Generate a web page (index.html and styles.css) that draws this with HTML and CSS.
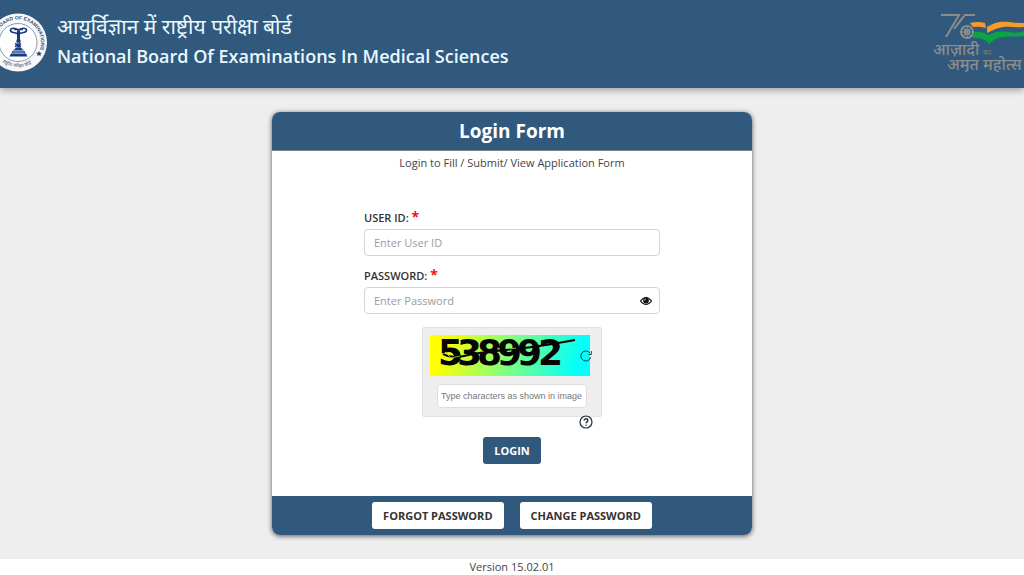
FILE: index.html
```html
<!DOCTYPE html>
<html lang="en">
<head>
<meta charset="utf-8">
<meta name="viewport" content="width=device-width, initial-scale=1">
<title>Login Form</title>
<link rel="stylesheet" href="styles.css">
</head>
<body>
<header class="site-header">
  <svg class="seal" viewBox="0 0 47 60" aria-hidden="true">
    <defs>
      <path id="ring-top" d="M-5 30A23 23 0 0 1 41 30A23 23 0 0 1 38 42"/>
      <path id="ring-bottom" d="M-7 38A27 27 0 0 0 43 38"/>
    </defs>
    <circle cx="18" cy="30" r="29" fill="#f6f8fb"/>
    <circle cx="18" cy="30" r="19" fill="#fff" stroke="#6f7f9b" stroke-width=".8"/>
    <text class="seal-text"><textPath href="#ring-top" startOffset="13">BOARD OF EXAMINATIONS</textPath></text>
    <text class="seal-hindi"><textPath href="#ring-bottom" startOffset="15">राष्ट्रीय परीक्षा बोर्ड</textPath></text>
    <path d="M39 38.200l.8 2 2.200.1-1.700 1.400.6 2.100-1.900-1.200-1.900 1.200.6-2.100-1.700-1.400 2.200-.1z" fill="#333b50"/>
    <g fill="#173b83">
      <path d="M11 41h15l1.500 3H9.500zM13 38h11l1.500 2.500h-14zM16 35h5l2 2.500h-9z"/>
      <path d="M17 18h3v8l-1 3 1 6h-3l1-6-1-3z"/>
      <circle cx="18.500" cy="28.500" r="2.200"/>
    </g>
    <path d="M18.500 18c-2-3-8-3-8 0 0 3 5 1 8 4 3-3 8-1 8-4s-6-3-8 0M14 17h9M15 31l6 3M21 31l-6 3" fill="none" stroke="#173b83" stroke-width="1.700"/>
    <path d="M18 30.500h1M13 39.500h11" stroke="#fff" stroke-width=".6"/>
  </svg>
  <div class="org">
    <div class="org-hindi" lang="hi">आयुर्विज्ञान में राष्ट्रीय परीक्षा बोर्ड</div>
    <div class="org-name">National Board Of Examinations In Medical Sciences</div>
  </div>
  <svg class="amrit" viewBox="0 0 92 60" role="img" aria-label="आज़ादी का अमृत महोत्सव">
    <g fill="none" stroke="#8b8c8b" stroke-width="2">
      <path d="M9 3h18L14 25M43 3H33L22 17M31 5l-6 8"/>
      <circle cx="35" cy="20" r="6"/>
      <circle cx="35" cy="20" r="2.500" stroke-width="1.500"/>
    </g>
    <path d="M35 14v12M29 20h12M31 16l8 8M39 16l-8 8" stroke="#9a9994" stroke-width=".8"/>
    <path d="M38 11q8-2 15 0l1 5q-7-2-13-1z" fill="#f59b2c"/>
    <path d="M55 15c8-5 13-6 22-5 6 1 10 1 15 1v4c-7 1-14-1-21 0-6 1-10 3-16 6z" fill="#f59b2c"/>
    <path d="M42 20q8-1 14 3c8-4 13-4 20-3 6 1 11 1 16-1v5c-7 1-13 0-20 1-7 0-10 3-15 7-4-5-8-6-16-6z" fill="#0ca345"/>
    <text class="amrit-text" x="1" y="43">आज़ादी</text>
    <text class="amrit-small" x="51" y="43">का</text>
    <text class="amrit-text" x="15" y="58">अमृत महोत्स</text>
  </svg>
</header>

<main class="page">
  <form class="card">
    <h1 class="card-title">Login Form</h1>
    <div class="card-body">
      <p class="intro">Login to Fill / Submit/ View Application Form</p>
      <div class="fields">
        <div class="field">
          <label class="label" for="user">USER ID: <span class="required">*</span></label>
          <input class="input" id="user" type="text" placeholder="Enter User ID">
        </div>
        <div class="field">
          <label class="label" for="password">PASSWORD: <span class="required">*</span></label>
          <div class="password-box">
            <input class="input" id="password" type="password" placeholder="Enter Password">
            <button class="icon-button eye" type="button" aria-label="Show password">
              <svg width="12" height="10" viewBox="0 0 12 10"><path d="M.5 5Q6-2 11.500 5 6 12 .5 5z" fill="#fff" stroke="#111" stroke-width="1.200"/><circle cx="6" cy="4.500" r="2.900" fill="#111"/><path d="M4.500 4.500Q4.500 3 6 3" stroke="#fff" stroke-width=".7" fill="none"/></svg>
            </button>
          </div>
        </div>
      </div>
      <div class="captcha">
        <div class="captcha-picture">
          <svg class="captcha-art" viewBox="0 0 160 40" role="img" aria-label="538992">
            <text class="captcha-code" x="8 27 47 67 87 108" y="30">538992</text>
            <path d="M13 19Q22 24 34 21T66 16 102 12 145 5" fill="none" stroke="#050505" stroke-width="2"/>
            <path d="M15 17l6 6 9-2M67 13l3 1M80 14l6-1" fill="none" stroke="#a4df32" stroke-width=".8"/>
          </svg>
          <button class="icon-button refresh" type="button" aria-label="New image">
            <svg width="12" height="12" viewBox="0 0 12 12" fill="none" stroke="#173c45"><path d="M10.700 7.200A5 5 0 1 1 10 3.200"/><path d="M11.300 1v3.500H8.500"/></svg>
          </button>
        </div>
        <input class="captcha-input" type="text" aria-label="Characters in image" placeholder="Type characters as shown in image">
        <button class="icon-button help" type="button" aria-label="Help">
          <svg width="14" height="14" viewBox="0 0 14 14" fill="none" stroke="#222c35" stroke-width="1.200"><circle cx="7" cy="7" r="6"/><path d="M5.200 5.500c0-2.300 3.700-2.200 3.700 0C8.900 6.900 7 6.800 7 8.300" stroke-width="1.400"/><circle cx="7" cy="10.200" r=".4" fill="#222c35" stroke-width=".7"/></svg>
        </button>
      </div>
      <button class="button login" type="submit">LOGIN</button>
    </div>
    <div class="card-actions">
      <button class="button light" type="button">FORGOT PASSWORD</button>
      <button class="button light" type="button">CHANGE PASSWORD</button>
    </div>
  </form>
</main>
<footer class="site-footer">Version 15.02.01</footer>
</body>
</html>
```

FILE: styles.css
```css
* {
  box-sizing: border-box;
}

body {
  display: flex;
  flex-direction: column;
  min-height: 100vh;
  margin: 0;
  overflow-x: hidden;
  background: #fff;
  color: #444;
  font-family: "Open Sans", sans-serif;
  font-size: 11px;
  line-height: 16px;
}

.site-header {
  display: flex;
  align-items: flex-start;
  padding: 12px 0 15px;
  background: #30597d;
  box-shadow: 0 2px 7px #999;
  z-index: 1;
}

.seal {
  flex: none;
  width: 47px;
  height: 61px;
}

.seal-text {
  fill: #43536f;
  font: 700 5px "Liberation Sans", sans-serif;
}

.seal-hindi {
  fill: #43536f;
  font: 5px "Noto Sans", sans-serif;
}

.org {
  flex: 1;
  padding-left: 10px;
  color: #e9f8ff;
}

.org-hindi {
  font-family: "Noto Sans", "Noto Sans Devanagari", sans-serif;
  font-size: 21px;
  line-height: 28px;
}

.org-name {
  font-size: 18px;
  font-weight: 600;
  line-height: 32px;
}

.amrit {
  flex: none;
  width: 92px;
  height: 60px;
}

.amrit-text {
  fill: #8f8d88;
  font: 500 16px "Noto Sans", "Noto Sans Devanagari", sans-serif;
}

.amrit-small {
  fill: #77817f;
  font: 8px "Noto Sans", "Noto Sans Devanagari", sans-serif;
}

.page {
  flex: 1;
  padding: 24px 16px;
  background: #eee;
}

.card {
  max-width: 480px;
  margin: 0 auto;
  overflow: hidden;
  border-radius: 8px;
  background: #fff;
  box-shadow: 0 1px 5px #555;
}

.card-title {
  margin: 0;
  border-bottom: 1px solid #78838c;
  background: #30597d;
  color: #fff;
  font-size: 19px;
  line-height: 38px;
  text-align: center;
}

.card-body {
  display: flex;
  flex-direction: column;
  align-items: center;
  padding: 4px 16px 32px;
}

.intro {
  margin: 0 0 37px;
}

.fields {
  display: grid;
  gap: 10px;
  width: 100%;
  max-width: 296px;
}

.label {
  display: block;
  height: 21px;
  color: #333;
  font-weight: 600;
  line-height: 20px;
}

.required {
  color: #ee1111;
  font-size: 14px;
  font-weight: 700;
  line-height: 16px;
}

.input {
  display: block;
  width: 100%;
  height: 27px;
  padding: 0 9px;
  border: 1px solid #d5d5d5;
  border-radius: 4px;
  background: #fff;
  font: 11px "Open Sans", sans-serif;
}

.input::placeholder {
  color: #9b9b9b;
}

.password-box,
.captcha-picture,
.captcha {
  position: relative;
}

.icon-button {
  display: flex;
  padding: 0;
  border: 0;
  background: none;
}

.eye {
  position: absolute;
  top: 9px;
  right: 8px;
}

.captcha {
  display: flex;
  flex-direction: column;
  align-items: center;
  gap: 8px;
  width: 180px;
  margin: 13px 0 20px;
  padding: 7px 7px 8px;
  border: 1px solid #e2e2e2;
  border-radius: 2px;
  background: #eee;
}

.captcha-picture {
  align-self: flex-start;
  width: 160px;
  height: 41px;
  background: linear-gradient(105deg, #ffff00 8%, #00ffff 92%);
}

.captcha-art {
  display: block;
  width: 100%;
}

.captcha-code {
  fill: #050505;
  font: 700 36px "DejaVu Sans", sans-serif;
}

.refresh {
  position: absolute;
  top: 15px;
  right: -2px;
}

.captcha-input {
  width: 150px;
  height: 24px;
  padding: 0 3px;
  border: 1px solid #ddd;
  border-radius: 4px;
  background: #fff;
  font: 9px "Liberation Sans", sans-serif;
}

.captcha-input::placeholder {
  color: #777;
}

.help {
  position: absolute;
  right: 8px;
  bottom: -13px;
}

.button {
  height: 27px;
  padding: 0 11px;
  border: 0;
  border-radius: 3px;
  font: 700 11px "Open Sans", sans-serif;
}

.login {
  background: #30597d;
  color: #fff;
}

.light {
  background: #fff;
  color: #333;
}

.card-actions {
  display: flex;
  flex-wrap: wrap;
  justify-content: center;
  gap: 16px;
  padding: 6px;
  background: #30597d;
}

.site-footer {
  text-align: center;
}
```
